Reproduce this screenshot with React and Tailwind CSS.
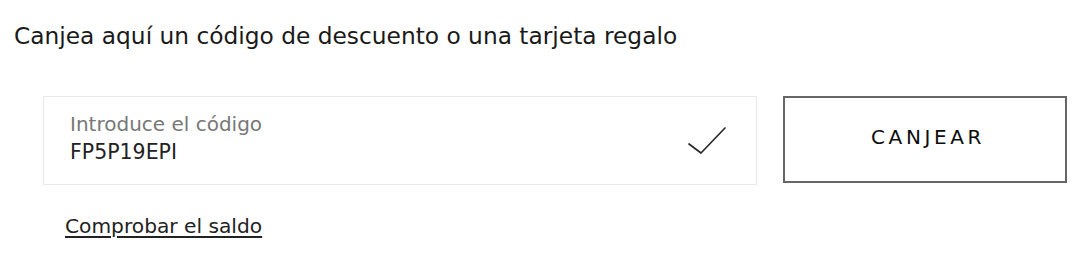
const CheckIcon = () => (
  <svg width="40" height="30" viewBox="0 0 40 30" fill="none">
    <path d="M2 18 L14 27 L38 2" stroke="#2a2a2a" strokeWidth="1.7" strokeLinecap="round" strokeLinejoin="round" />
  </svg>
);

export default function App() {
  return (
    <div className="w-[1085px] h-[258px] bg-white pl-[14px] pt-[22px]" style={{ fontFamily: '"DejaVu Sans", "Open Sans", sans-serif' }}>
      <h2 className="text-[23.3px] leading-[28px] text-[#1a1a1a]">
        Canjea aquí un código de descuento o una tarjeta regalo
      </h2>

      <div className="flex items-start gap-[26px] ml-[29px] mt-[46px]">
        <div className="w-[714px] h-[89px] border border-[#e8e8e8] flex items-start pl-[26px] pr-[29px]">
          <div className="flex-1 flex flex-col pt-[16px]">
            <span className="text-[20px] leading-[22px] text-[#777]">Introduce el código</span>
            <span className="text-[20.5px] leading-[22px] text-[#222] mt-[6px]">FP5P19EPI</span>
          </div>
          <div className="self-center">
            <CheckIcon />
          </div>
        </div>

        <button className="w-[284px] h-[87px] border-2 border-[#666] bg-white pb-[5px] pl-[6px] text-[20px] tracking-[3.6px] text-[#0d0d0d]">
          CANJEAR
        </button>
      </div>

      <div className="ml-[51px] mt-[29px]">
        <a href="#" className="text-[20.2px] leading-[24px] text-[#222] underline decoration-[1.5px] underline-offset-[3px]">
          Comprobar el saldo
        </a>
      </div>
    </div>
  );
}
